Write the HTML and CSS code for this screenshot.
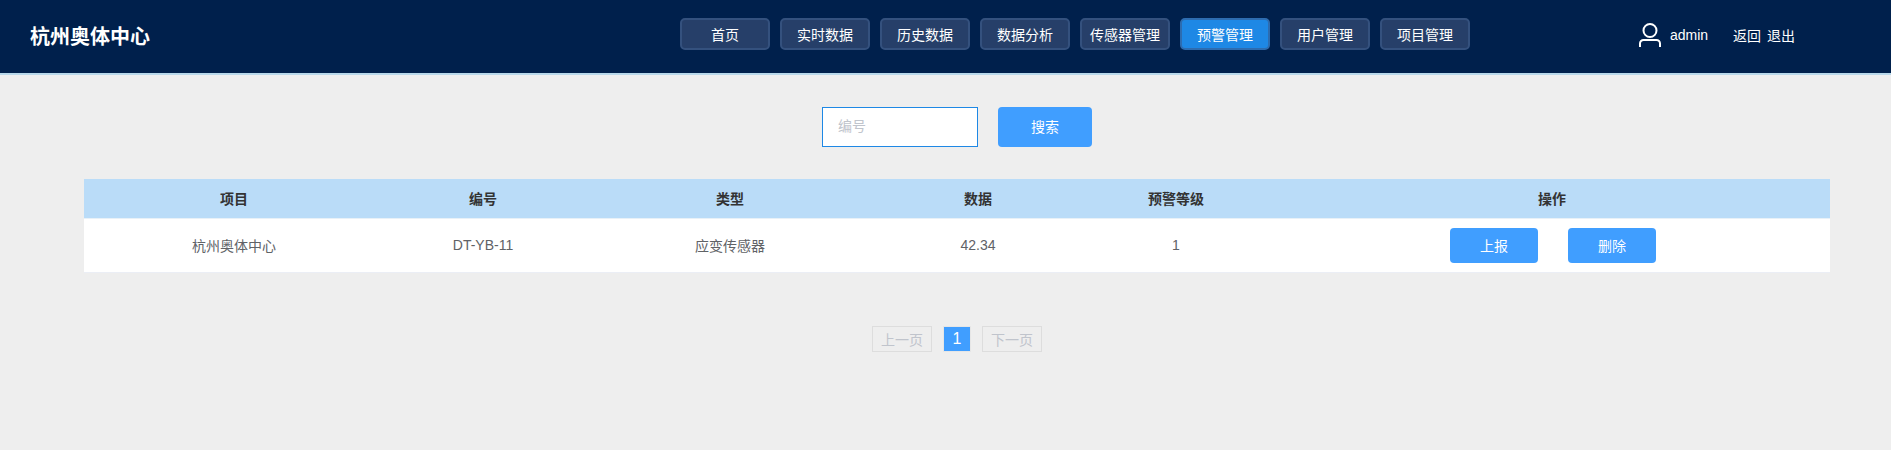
FILE: index.html
```html
<!DOCTYPE html>
<html lang="zh-CN">
<head>
<meta charset="utf-8">
<title>杭州奥体中心</title>
<link rel="stylesheet" href="styles.css">
</head>
<body>
<header class="topbar">
  <div class="brand">杭州奥体中心</div>
  <nav class="nav">
    <a class="nav-item">首页</a>
    <a class="nav-item">实时数据</a>
    <a class="nav-item">历史数据</a>
    <a class="nav-item">数据分析</a>
    <a class="nav-item">传感器管理</a>
    <a class="nav-item nav-item-active">预警管理</a>
    <a class="nav-item">用户管理</a>
    <a class="nav-item">项目管理</a>
  </nav>
  <div class="user">
    <svg class="user-icon" width="22" height="24" viewBox="0 0 22 24" fill="none" stroke="#fff" stroke-width="2">
      <circle cx="11" cy="7.5" r="6.5"/>
      <path d="M1 24v-3.5a3.5 3.5 0 0 1 3.5-3.5h13a3.5 3.5 0 0 1 3.5 3.5V24"/>
    </svg>
    <span class="user-name">admin</span>
    <a class="user-link user-link-back">返回</a>
    <a class="user-link">退出</a>
  </div>
</header>
<main class="content">
  <form class="search">
    <input class="search-input" type="text" placeholder="编号">
    <button class="btn btn-search" type="button">搜索</button>
  </form>
  <table class="data-table">
    <colgroup>
      <col class="col-project"><col class="col-code"><col class="col-type"><col class="col-value"><col class="col-level"><col class="col-actions">
    </colgroup>
    <thead>
      <tr><th>项目</th><th>编号</th><th>类型</th><th>数据</th><th>预警等级</th><th>操作</th></tr>
    </thead>
    <tbody>
      <tr>
        <td>杭州奥体中心</td>
        <td>DT-YB-11</td>
        <td>应变传感器</td>
        <td>42.34</td>
        <td>1</td>
        <td><div class="actions"><button class="btn btn-row" type="button">上报</button><button class="btn btn-row" type="button">删除</button></div></td>
      </tr>
    </tbody>
  </table>
  <div class="pager">
    <span class="pager-btn">上一页</span>
    <span class="pager-num">1</span>
    <span class="pager-btn">下一页</span>
  </div>
</main>
</body>
</html>
```
FILE: styles.css
```css
* { box-sizing: border-box; }
html, body { margin: 0; height: 450px; overflow: hidden; }
body {
  background: #eeeeee;
  font-family: "Liberation Sans", "Noto Sans CJK SC", sans-serif;
  font-size: 14px;
  color: #606266;
}
.topbar {
  display: flex;
  align-items: center;
  height: 75px;
  padding: 0 96px 5px 30px;
  background: #00204c;
  border-bottom: 2px solid #b8d8ea;
}
.brand { width: 120px; font-size: 20px; font-weight: 700; color: #fff; margin-top: 2px; }
.nav { display: flex; gap: 10px; margin-left: 530px; }
.nav-item {
  display: flex;
  align-items: center;
  justify-content: center;
  width: 90px;
  height: 32px;
  background: #263f69;
  border: 2px solid #34517e;
  border-radius: 5px;
  color: #fff;
  white-space: nowrap;
}
.nav-item-active { background: #1e88e5; border-color: #2d6cb0; }
.user { display: flex; align-items: center; margin-left: auto; color: #fff; }
.user-icon { display: block; margin-right: 9px; margin-top: 1px; }
.user-name { width: 38px; margin-right: 25px; margin-top: 1px; white-space: nowrap; }
.user-link { color: #fff; margin-left: 6px; margin-top: 2px; }
.user-link-back { margin-left: 0; }
.content { padding: 32px 61px 0 84px; }
.search { display: flex; justify-content: center; gap: 20px; height: 40px; margin: 0 -61px 0 -84px; padding-left: 23px; }
.search-input {
  width: 156px;
  height: 40px;
  padding: 0 15px 2px;
  background: #fff;
  border: 1px solid #1e88e5;
  font: inherit;
  outline: none;
}
.search-input::placeholder { color: #c0c4cc; opacity: 1; }
.btn {
  border: 0;
  border-radius: 4px;
  background: #409eff;
  color: #fff;
  font: inherit;
  padding: 0;
}
.btn-search { width: 94px; height: 40px; padding-bottom: 2px; }
.data-table {
  width: 1746px;
  margin-top: 32px;
  table-layout: fixed;
  border-collapse: separate;
  border-spacing: 0;
  background: #fff;
  text-align: center;
}
.col-project { width: 300px; }
.col-code { width: 198px; }
.col-type { width: 296px; }
.col-value { width: 200px; }
.col-level { width: 196px; }
.col-actions { width: 556px; }
.data-table th {
  height: 40px;
  padding: 0 0 1px;
  background: #badcf8;
  border-bottom: 1px solid #e8f1f8;
  color: #333;
  font-weight: 700;
}
.data-table td {
  height: 54px;
  padding: 0 0 2px;
  border-bottom: 1px solid #ebeef5;
}
.actions { display: flex; justify-content: center; gap: 30px; padding: 2px 0 0 2px; }
.btn-row { width: 88px; height: 35px; padding-bottom: 1px; }
.pager {
  display: flex;
  justify-content: center;
  gap: 11px;
  margin-top: 53px;
  color: #c0c4cc;
}
.pager-btn {
  display: flex;
  align-items: center;
  justify-content: center;
  width: 60px;
  height: 26px;
  border: 1px solid #dddddd;
}
.pager-num {
  display: flex;
  align-items: center;
  justify-content: center;
  width: 28px;
  height: 26px;
  background: #409eff;
  border: 1px solid #e6e6e6;
  color: #fff;
  font-size: 16px;
}
```
